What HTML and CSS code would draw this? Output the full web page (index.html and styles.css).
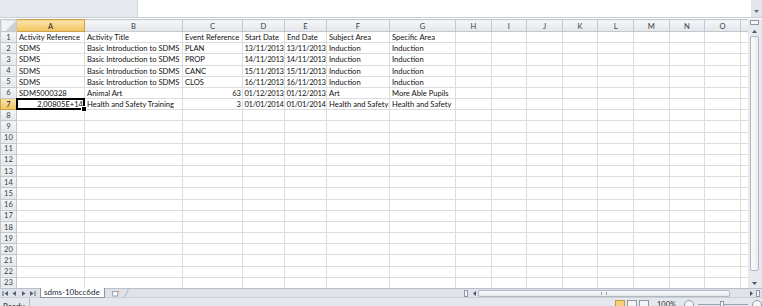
FILE: index.html
```html
<!DOCTYPE html>
<html>
<head>
	<title>sdms-10bcc6de</title>
	<meta charset="utf-8">
	<link rel="stylesheet" href="styles.css">
</head>
<body>
<div class="topbar">
	<div class="namebox"></div>
	<div class="ribbon-btn"><svg width="7" height="5" viewBox="0 0 7 5"><path d="M1 1h5L3.5 4z" fill="#6b7380"/></svg></div>
</div>

<div class="main">
	<div class="sheet">
	<table class="grid">
		<colgroup>
			<col class="c-rh"><col class="c-a"><col class="c-b"><col class="c-c"><col class="c-d"><col class="c-e"><col class="c-f"><col class="c-g">
			<col class="c-n"><col class="c-n"><col class="c-n"><col class="c-n"><col class="c-n"><col class="c-n"><col class="c-n"><col class="c-n"><col class="c-p">
		</colgroup>
		<thead>
			<tr><th class="corner"></th><th class="hl">A</th><th>B</th><th>C</th><th>D</th><th>E</th><th>F</th><th>G</th><th>H</th><th>I</th><th>J</th><th>K</th><th>L</th><th>M</th><th>N</th><th>O</th><th></th></tr>
		</thead>
		<tbody>
			<tr><th>1</th><td>Activity Reference</td><td>Activity Title</td><td>Event Reference</td><td>Start Date</td><td>End Date</td><td>Subject Area</td><td>Specific Area</td><td></td><td></td><td></td><td></td><td></td><td></td><td></td><td></td><td></td></tr>
			<tr><th>2</th><td>SDMS</td><td>Basic Introduction to SDMS</td><td>PLAN</td><td class="dt">13/11/2013</td><td class="dt">13/11/2013</td><td>Induction</td><td>Induction</td><td></td><td></td><td></td><td></td><td></td><td></td><td></td><td></td><td></td></tr>
			<tr><th>3</th><td>SDMS</td><td>Basic Introduction to SDMS</td><td>PROP</td><td class="dt">14/11/2013</td><td class="dt">14/11/2013</td><td>Induction</td><td>Induction</td><td></td><td></td><td></td><td></td><td></td><td></td><td></td><td></td><td></td></tr>
			<tr><th>4</th><td>SDMS</td><td>Basic Introduction to SDMS</td><td>CANC</td><td class="dt">15/11/2013</td><td class="dt">15/11/2013</td><td>Induction</td><td>Induction</td><td></td><td></td><td></td><td></td><td></td><td></td><td></td><td></td><td></td></tr>
			<tr><th>5</th><td>SDMS</td><td>Basic Introduction to SDMS</td><td>CLOS</td><td class="dt">16/11/2013</td><td class="dt">16/11/2013</td><td>Induction</td><td>Induction</td><td></td><td></td><td></td><td></td><td></td><td></td><td></td><td></td><td></td></tr>
			<tr><th>6</th><td>SDM5000328</td><td>Animal Art</td><td class="num">63</td><td class="dt">01/12/2013</td><td class="dt">01/12/2013</td><td>Art</td><td>More Able Pupils</td><td></td><td></td><td></td><td></td><td></td><td></td><td></td><td></td><td></td></tr>
			<tr><th class="hl">7</th><td class="num sel">2.00805E+14</td><td>Health and Safety Training</td><td class="num">3</td><td class="dt">01/01/2014</td><td class="dt">01/01/2014</td><td>Health and Safety</td><td>Health and Safety</td><td></td><td></td><td></td><td></td><td></td><td></td><td></td><td></td><td></td></tr>
			<tr><th>8</th><td></td><td></td><td></td><td></td><td></td><td></td><td></td><td></td><td></td><td></td><td></td><td></td><td></td><td></td><td></td><td></td></tr>
			<tr><th>9</th><td></td><td></td><td></td><td></td><td></td><td></td><td></td><td></td><td></td><td></td><td></td><td></td><td></td><td></td><td></td><td></td></tr>
			<tr><th>10</th><td></td><td></td><td></td><td></td><td></td><td></td><td></td><td></td><td></td><td></td><td></td><td></td><td></td><td></td><td></td><td></td></tr>
			<tr><th>11</th><td></td><td></td><td></td><td></td><td></td><td></td><td></td><td></td><td></td><td></td><td></td><td></td><td></td><td></td><td></td><td></td></tr>
			<tr><th>12</th><td></td><td></td><td></td><td></td><td></td><td></td><td></td><td></td><td></td><td></td><td></td><td></td><td></td><td></td><td></td><td></td></tr>
			<tr><th>13</th><td></td><td></td><td></td><td></td><td></td><td></td><td></td><td></td><td></td><td></td><td></td><td></td><td></td><td></td><td></td><td></td></tr>
			<tr><th>14</th><td></td><td></td><td></td><td></td><td></td><td></td><td></td><td></td><td></td><td></td><td></td><td></td><td></td><td></td><td></td><td></td></tr>
			<tr><th>15</th><td></td><td></td><td></td><td></td><td></td><td></td><td></td><td></td><td></td><td></td><td></td><td></td><td></td><td></td><td></td><td></td></tr>
			<tr><th>16</th><td></td><td></td><td></td><td></td><td></td><td></td><td></td><td></td><td></td><td></td><td></td><td></td><td></td><td></td><td></td><td></td></tr>
			<tr><th>17</th><td></td><td></td><td></td><td></td><td></td><td></td><td></td><td></td><td></td><td></td><td></td><td></td><td></td><td></td><td></td><td></td></tr>
			<tr><th>18</th><td></td><td></td><td></td><td></td><td></td><td></td><td></td><td></td><td></td><td></td><td></td><td></td><td></td><td></td><td></td><td></td></tr>
			<tr><th>19</th><td></td><td></td><td></td><td></td><td></td><td></td><td></td><td></td><td></td><td></td><td></td><td></td><td></td><td></td><td></td><td></td></tr>
			<tr><th>20</th><td></td><td></td><td></td><td></td><td></td><td></td><td></td><td></td><td></td><td></td><td></td><td></td><td></td><td></td><td></td><td></td></tr>
			<tr><th>21</th><td></td><td></td><td></td><td></td><td></td><td></td><td></td><td></td><td></td><td></td><td></td><td></td><td></td><td></td><td></td><td></td></tr>
			<tr><th>22</th><td></td><td></td><td></td><td></td><td></td><td></td><td></td><td></td><td></td><td></td><td></td><td></td><td></td><td></td><td></td><td></td></tr>
			<tr><th>23</th><td></td><td></td><td></td><td></td><td></td><td></td><td></td><td></td><td></td><td></td><td></td><td></td><td></td><td></td><td></td><td></td></tr>
			<tr><th>24</th><td></td><td></td><td></td><td></td><td></td><td></td><td></td><td></td><td></td><td></td><td></td><td></td><td></td><td></td><td></td><td></td></tr>
		</tbody>
	</table>
	</div>

	<div class="vscroll">
		<div class="split-v"></div>
		<div class="sbtn"><svg width="7" height="5" viewBox="0 0 7 5"><path d="M3.5 1L6 4H1z" fill="#4a5260"/></svg></div>
		<div class="thumb-v"></div>
		<div class="track-v"></div>
		<div class="sbtn"><svg width="7" height="5" viewBox="0 0 7 5"><path d="M1 1h5L3.5 4z" fill="#4a5260"/></svg></div>
	</div>
</div>

<div class="tabbar">
	<div class="nav">
		<svg width="7" height="7" viewBox="0 0 7 7"><path d="M1 1v5" stroke="#5a6270"/><path d="M6 1v5L2.5 3.5z" fill="#5a6270"/></svg>
		<svg width="7" height="7" viewBox="0 0 7 7"><path d="M5 1v5L1.5 3.5z" fill="#5a6270"/></svg>
		<svg width="7" height="7" viewBox="0 0 7 7"><path d="M2 1v5l3.5-2.5z" fill="#5a6270"/></svg>
		<svg width="7" height="7" viewBox="0 0 7 7"><path d="M1 1v5l3.5-2.5z" fill="#5a6270"/><path d="M6 1v5" stroke="#5a6270"/></svg>
	</div>
	<div class="tab">sdms-10bcc6de</div>
	<div class="newtab">
		<svg width="9" height="7" viewBox="0 0 9 7"><rect x="1" y="1.5" width="5" height="4.5" fill="#fff" stroke="#7d8fa8" stroke-width="0.8"/><path d="M5 1.5l1.5-1 1.5 1-1.5 1z" fill="#f0a830"/></svg>
	</div>
	<div class="tabfill"></div>
	<div class="hscroll">
		<div class="split-h"></div>
		<div class="sbtn-h"><svg width="5" height="7" viewBox="0 0 5 7"><path d="M4 1v5L1 3.5z" fill="#4a5260"/></svg></div>
		<div class="thumb-h"><span class="grip"></span></div>
		<div class="track-h"></div>
		<div class="sbtn-h"><svg width="5" height="7" viewBox="0 0 5 7"><path d="M1 1v5l3-2.5z" fill="#4a5260"/></svg></div>
		<div class="split-h2"></div>
	</div>
</div>

<div class="status">
	<span class="ready">Ready</span>
	<span class="status-fill"></span>
	<span class="views">
		<span class="view on"></span><span class="view"></span><span class="view"></span>
	</span>
	<span class="zoom">100%</span>
	<span class="zbtn"></span>
	<span class="slider"><span class="knob"></span></span>
	<span class="zbtn"></span>
</div>
</body>
</html>
```

FILE: styles.css
```css
*{box-sizing:border-box;}
body{margin:0;width:762px;height:306px;overflow:hidden;background:#fff;font-family:Lato,"Liberation Sans",sans-serif;font-size:7.6px;color:#111;}

/* top: formula bar remnant */
.topbar{display:flex;justify-content:space-between;height:18px;border-bottom:1px solid #c9cdd3;margin-bottom:1px;}
.namebox{width:138px;height:17px;background:#e5e8ec;border-right:1px solid #d3d7dc;}
.ribbon-btn{width:11px;height:17px;background:#e2e6eb;display:flex;align-items:flex-end;justify-content:center;padding-bottom:3px;}

.main{display:flex;height:269px;}
.sheet{width:748px;overflow:hidden;}

/* grid */
.grid{border-collapse:collapse;table-layout:fixed;width:748px;}
.c-rh{width:16px;}
.c-a{width:68px;}
.c-b{width:98px;}
.c-c{width:60px;}
.c-d{width:42px;}
.c-e{width:42px;}
.c-f{width:63px;}
.c-g{width:66px;}
.c-n{width:35.6px;}
.c-p{width:8.2px;}
.grid thead tr{height:12px;}
.grid tbody tr{height:11.18px;}
.grid th{font-weight:normal;color:#3a3f47;background:linear-gradient(#f5f6f8,#e3e6ea);border:1px solid #c3c8cf;padding:0;line-height:9px;text-align:center;overflow:hidden;white-space:nowrap;}
.grid thead th{line-height:10px;}
.grid th.hl{background:linear-gradient(#fbe4aa,#f2c25c);border-color:#c9a24e;color:#222;}
.grid th.corner{background:linear-gradient(135deg,#f1f3f5 55%,#cdd1d7 56%);}
.grid td{border:1px solid #dadcdd;padding:1px 1px 0 2px;line-height:9px;white-space:nowrap;overflow:hidden;text-align:left;}
.grid td.num{text-align:right;}
.grid td.dt{letter-spacing:-0.3px;padding-left:1.5px;padding-right:0;}
.grid td.sel{position:relative;overflow:visible;}
.grid td.sel::after{content:"";position:absolute;left:-1px;top:-1px;right:-1px;bottom:-1px;border:2px solid #000;}
.grid td.sel::before{content:"";position:absolute;right:-3px;bottom:-3px;width:4px;height:4px;background:#000;border:1px solid #fff;z-index:1;}

/* vertical scrollbar */
.vscroll{width:14px;background:#e6e9ed;display:flex;flex-direction:column;align-items:center;padding:1px 3px 0 2px;}
.split-v{width:9px;height:5px;border:1px solid #8f98a4;background:#f5f6f8;margin-bottom:2px;}
.sbtn{width:9px;height:9px;display:flex;align-items:center;justify-content:center;}
.thumb-v{width:9px;height:235px;background:linear-gradient(90deg,#fbfbfc,#e9ecf0);border:1px solid #b1b8c2;border-radius:2px;}
.track-v{flex:1;}

/* sheet tabs + horizontal scrollbar */
.tabbar{display:flex;height:9px;background:#dfe3e9;border-top:1px solid #b9bfc8;}
.nav{width:40px;display:flex;align-items:center;gap:2px;padding-left:2px;}
.tab{padding:0 4px 0 3px;background:#fff;line-height:8px;font-size:8px;color:#1d2a3a;border-left:1px solid #8d96a3;border-right:1px solid #8d96a3;border-bottom:1px solid #8d96a3;margin-top:-1px;height:10px;}
.newtab{width:20px;display:flex;align-items:center;justify-content:center;border-right:1px solid #b0b7c1;transform:skewX(-25deg);margin-left:2px;}
.newtab svg{transform:skewX(25deg);}
.tabfill{flex:1;}
.hscroll{width:298px;display:flex;align-items:center;padding-right:2px;}
.split-h{width:4px;height:7px;border:1px solid #8f98a4;background:#f5f6f8;margin-right:2px;}
.sbtn-h{width:8px;height:8px;display:flex;align-items:center;justify-content:center;}
.thumb-h{width:252px;height:7px;background:linear-gradient(#fbfbfc,#e7eaee);border:1px solid #b1b8c2;border-radius:2px;display:flex;align-items:center;justify-content:center;}
.grip{width:6px;height:3px;border-left:1px solid #9aa2ad;border-right:1px solid #9aa2ad;}
.track-h{flex:1;}
.split-h2{width:4px;height:7px;border:1px solid #8f98a4;background:#f5f6f8;margin-left:1px;}

/* status bar */
.status{display:flex;height:9px;background:#e4e8ee;border-top:1px solid #cbd0d7;overflow:hidden;align-items:flex-start;}
.ready{padding:3px 4px 0 3px;line-height:10px;font-size:8px;color:#222;border-right:1px solid #b7bdc6;height:12px;}
.status-fill{flex:1;}
.views{display:flex;gap:2px;margin-top:2px;margin-right:8px;}
.view{width:10px;height:8px;border:1px solid #8f98a4;background:#f3f4f6;}
.view.on{background:#f6cf7a;border-color:#c99a3e;}
.zoom{font-size:7.5px;line-height:10px;padding-top:2px;color:#333;margin-right:8px;}
.zbtn{width:10px;height:10px;border:1px solid #8f98a4;border-radius:50%;margin-top:2px;background:#f6f7f9;}
.slider{width:50px;height:10px;position:relative;margin:0 4px;}
.slider::before{content:"";position:absolute;left:0;right:0;top:6px;border-top:1px solid #9aa2ad;}
.knob{position:absolute;left:22px;top:3px;width:4px;height:8px;background:#f6f7f9;border:1px solid #8f98a4;}
```
